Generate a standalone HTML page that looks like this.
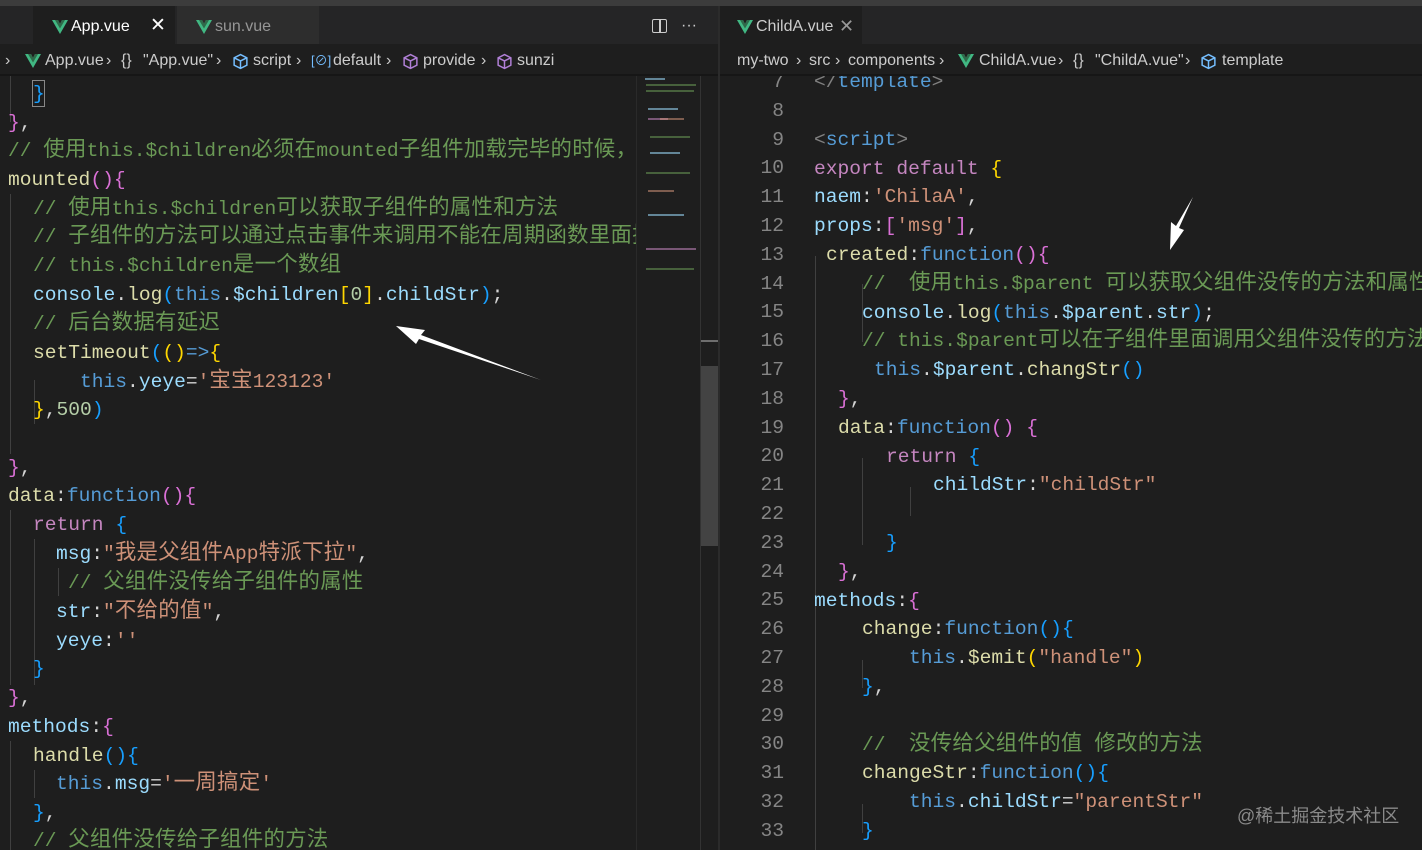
<!DOCTYPE html>
<html><head><meta charset="utf-8"><style>
*{margin:0;padding:0;box-sizing:border-box}
body{width:1422px;height:850px;background:#1e1e1e;overflow:hidden;position:relative;font-family:"Liberation Sans","Noto Sans CJK SC",sans-serif}
.abs{position:absolute}
.code{position:absolute;overflow:hidden;font-family:"Liberation Mono","Noto Sans CJK SC",monospace;font-size:19.6px;color:#d4d4d4}
.l{position:absolute;white-space:pre;height:29px;line-height:29px}
.z{font-size:21.4px;letter-spacing:0.3px}
.c{color:#6a9955}.k{color:#569cd6}.p{color:#9cdcfe}.s{color:#ce9178}.f{color:#dcdcaa}.r{color:#c586c0}
.g{color:#ffd700}.m{color:#da70d6}.b{color:#179fff}.t{color:#808080}
.n{position:absolute;width:40px;text-align:right;color:#858585;white-space:pre;line-height:28.8px}
.tx{position:absolute;font-size:16px;white-space:nowrap;line-height:20px}
.guide{position:absolute;width:1px;background:#404040}
.mm{position:absolute;height:2px;opacity:.55}
</style></head><body>
<svg width="0" height="0" style="position:absolute"><defs><symbol id="vue" viewBox="0 0 16 14"><polygon points="0,0 6,0 8,4 10,0 16,0 8,14" fill="#41b883"/><polygon points="3,0 6,0 8,4 10,0 13,0 8,8.5" fill="#2f6a4a"/></symbol>
<symbol id="cube" viewBox="0 0 16 16"><path d="M8 1.5 L14 4.5 L14 11.5 L8 14.5 L2 11.5 L2 4.5 Z M2 4.5 L8 7.5 L14 4.5 M8 7.5 L8 14.5" fill="none" stroke="currentColor" stroke-width="1.4"/></symbol></defs></svg>
<div class="abs" style="left:0;top:0;width:1422px;height:6px;background:#3c3c3c"></div>
<div class="abs" style="left:0;top:6px;width:718px;height:38px;background:#252526"></div>
<div class="abs" style="left:720px;top:6px;width:702px;height:38px;background:#252526"></div>
<div class="abs" style="left:33px;top:6px;width:142px;height:38px;background:#1e1e1e"></div>
<div class="abs" style="left:177px;top:6px;width:142px;height:38px;background:#2d2d2d"></div>
<div class="abs" style="left:720px;top:6px;width:142px;height:38px;background:#1e1e1e"></div>
<svg class="abs" style="left:52px;top:20px" width="16" height="14"><use href="#vue"/></svg>
<div class="tx" style="left:71px;top:17px;color:#fff">App.vue</div>
<div class="tx" style="left:150px;top:16px;color:#fff;font-size:19px">✕</div>
<svg class="abs" style="left:196px;top:20px" width="16" height="14"><use href="#vue"/></svg>
<div class="tx" style="left:215px;top:17px;color:#969696">sun.vue</div>
<div class="abs" style="left:652px;top:19px;width:15px;height:14px;border:1.5px solid #ccc;border-radius:2px"></div>
<div class="abs" style="left:659px;top:19px;width:1.5px;height:14px;background:#ccc"></div>
<div class="tx" style="left:681px;top:16px;color:#ccc">···</div>
<svg class="abs" style="left:737px;top:20px" width="16" height="14"><use href="#vue"/></svg>
<div class="tx" style="left:756px;top:17px;color:#ccc">ChildA.vue</div>
<div class="tx" style="left:839px;top:16px;color:#999;font-size:18px">✕</div>

<!-- breadcrumbs -->
<div class="tx" style="left:5px;top:51px;color:#ccc">›</div>
<svg class="abs" style="left:25px;top:54px" width="16" height="14"><use href="#vue"/></svg>
<div class="tx" style="left:45px;top:51px;color:#ccc">App.vue</div>
<div class="tx" style="left:106px;top:51px;color:#ccc">›</div>
<div class="tx" style="left:121px;top:51px;color:#ccc">{}</div>
<div class="tx" style="left:143px;top:51px;color:#ccc">"App.vue"</div>
<div class="tx" style="left:216px;top:51px;color:#ccc">›</div>
<svg class="abs" style="left:232px;top:53px;color:#75beff" width="17" height="17"><use href="#cube"/></svg>
<div class="tx" style="left:253px;top:51px;color:#ccc">script</div>
<div class="tx" style="left:296px;top:51px;color:#ccc">›</div>
<div class="tx" style="left:311px;top:51px;color:#75beff;font-size:13px">[⊘]</div>
<div class="tx" style="left:333px;top:51px;color:#ccc">default</div>
<div class="tx" style="left:386px;top:51px;color:#ccc">›</div>
<svg class="abs" style="left:402px;top:53px;color:#b180d7" width="17" height="17"><use href="#cube"/></svg>
<div class="tx" style="left:423px;top:51px;color:#ccc">provide</div>
<div class="tx" style="left:481px;top:51px;color:#ccc">›</div>
<svg class="abs" style="left:496px;top:53px;color:#b180d7" width="17" height="17"><use href="#cube"/></svg>
<div class="tx" style="left:517px;top:51px;color:#ccc">sunzi</div>

<div class="tx" style="left:737px;top:51px;color:#ccc">my-two</div>
<div class="tx" style="left:796px;top:51px;color:#ccc">›</div>
<div class="tx" style="left:809px;top:51px;color:#ccc">src</div>
<div class="tx" style="left:835px;top:51px;color:#ccc">›</div>
<div class="tx" style="left:848px;top:51px;color:#ccc">components</div>
<div class="tx" style="left:939px;top:51px;color:#ccc">›</div>
<svg class="abs" style="left:958px;top:54px" width="16" height="14"><use href="#vue"/></svg>
<div class="tx" style="left:979px;top:51px;color:#ccc">ChildA.vue</div>
<div class="tx" style="left:1058px;top:51px;color:#ccc">›</div>
<div class="tx" style="left:1073px;top:51px;color:#ccc">{}</div>
<div class="tx" style="left:1095px;top:51px;color:#ccc">"ChildA.vue"</div>
<div class="tx" style="left:1185px;top:51px;color:#ccc">›</div>
<svg class="abs" style="left:1200px;top:53px;color:#75beff" width="17" height="17"><use href="#cube"/></svg>
<div class="tx" style="left:1222px;top:51px;color:#ccc">template</div>

<div class="abs" style="left:0;top:74px;width:718px;height:2px;background:#161616"></div>
<div class="abs" style="left:720px;top:74px;width:702px;height:2px;background:#161616"></div>

<!-- left code -->
<div class="code" style="left:0;top:76px;width:636px;height:774px">
<div class="guide" style="left:10px;top:0;height:46px"></div>
<div class="guide" style="left:10px;top:118px;height:260px"></div>
<div class="guide" style="left:34px;top:304px;height:44px"></div>
<div class="guide" style="left:10px;top:434px;height:175px"></div>
<div class="guide" style="left:34px;top:463px;height:146px"></div>
<div class="guide" style="left:58px;top:492px;height:28px"></div>
<div class="guide" style="left:10px;top:665px;height:110px"></div>
<div class="guide" style="left:34px;top:694px;height:28px"></div>
<div class="abs" style="left:32px;top:4px;width:13px;height:27px;border:1px solid #888"></div>
<div class="l" style="left:33px;top:4px"><span class="b">}</span></div>
<div class="l" style="left:8px;top:33px"><span class="m">}</span>,</div>
<div class="l" style="left:8px;top:61px"><span class="c">// <span class="z">使用</span>this.$children<span class="z">必须在</span>mounted<span class="z">子组件加载完毕的时候，</span></span></div>
<div class="l" style="left:8px;top:90px"><span class="f">mounted</span><span class="m">()</span><span class="m">{</span></div>
<div class="l" style="left:33px;top:119px"><span class="c">// <span class="z">使用</span>this.$children<span class="z">可以获取子组件的属性和方法</span></span></div>
<div class="l" style="left:33px;top:147px"><span class="c">// <span class="z">子组件的方法可以通过点击事件来调用不能在周期函数里面掉</span></span></div>
<div class="l" style="left:33px;top:176px"><span class="c">// this.$children<span class="z">是一个数组</span></span></div>
<div class="l" style="left:33px;top:205px"><span class="p">console</span>.<span class="f">log</span><span class="b">(</span><span class="k">this</span>.<span class="p">$children</span><span class="g">[</span><span style="color:#b5cea8">0</span><span class="g">]</span>.<span class="p">childStr</span><span class="b">)</span>;</div>
<div class="l" style="left:33px;top:234px"><span class="c">// <span class="z">后台数据有延迟</span></span></div>
<div class="l" style="left:33px;top:263px"><span class="f">setTimeout</span><span class="b">(</span><span class="g">()</span><span class="k">=&gt;</span><span class="g">{</span></div>
<div class="l" style="left:80px;top:292px"><span class="k">this</span>.<span class="p">yeye</span>=<span class="s">'<span class="z">宝宝</span>123123'</span></div>
<div class="l" style="left:33px;top:320px"><span class="g">}</span>,<span style="color:#b5cea8">500</span><span class="b">)</span></div>
<div class="l" style="left:8px;top:378px"><span class="m">}</span>,</div>
<div class="l" style="left:8px;top:406px"><span class="f">data</span>:<span class="k">function</span><span class="m">()</span><span class="m">{</span></div>
<div class="l" style="left:33px;top:435px"><span class="r">return</span> <span class="b">{</span></div>
<div class="l" style="left:56px;top:464px"><span class="p">msg</span>:<span class="s">"<span class="z">我是父组件</span>App<span class="z">特派下拉</span>"</span>,</div>
<div class="l" style="left:68px;top:493px"><span class="c">// <span class="z">父组件没传给子组件的属性</span></span></div>
<div class="l" style="left:56px;top:522px"><span class="p">str</span>:<span class="s">"<span class="z">不给的值</span>"</span>,</div>
<div class="l" style="left:56px;top:551px"><span class="p">yeye</span>:<span class="s">''</span></div>
<div class="l" style="left:33px;top:579px"><span class="b">}</span></div>
<div class="l" style="left:8px;top:608px"><span class="m">}</span>,</div>
<div class="l" style="left:8px;top:637px"><span class="p">methods</span>:<span class="m">{</span></div>
<div class="l" style="left:33px;top:666px"><span class="f">handle</span><span class="b">()</span><span class="b">{</span></div>
<div class="l" style="left:56px;top:694px"><span class="k">this</span>.<span class="p">msg</span>=<span class="s">'<span class="z">一周搞定</span>'</span></div>
<div class="l" style="left:33px;top:723px"><span class="b">}</span>,</div>
<div class="l" style="left:33px;top:751px"><span class="c">// <span class="z">父组件没传给子组件的方法</span></span></div>
</div>
<!-- minimap -->
<div class="abs" style="left:636px;top:76px;width:64px;height:774px;background:#1e1e1e;border-left:1px solid #2a2a2a"></div>
<div class="mm" style="left:645px;top:78px;width:20px;background:#9cdcfe"></div>
<div class="mm" style="left:646px;top:84px;width:50px;background:#6a9955"></div>
<div class="mm" style="left:646px;top:90px;width:48px;background:#6a9955"></div>
<div class="mm" style="left:648px;top:108px;width:30px;background:#9cdcfe"></div>
<div class="mm" style="left:648px;top:118px;width:20px;background:#c586c0"></div>
<div class="mm" style="left:660px;top:118px;width:24px;background:#ce9178"></div>
<div class="mm" style="left:650px;top:136px;width:40px;background:#6a9955"></div>
<div class="mm" style="left:650px;top:152px;width:30px;background:#9cdcfe"></div>
<div class="mm" style="left:646px;top:172px;width:44px;background:#6a9955"></div>
<div class="mm" style="left:648px;top:190px;width:26px;background:#ce9178"></div>
<div class="mm" style="left:648px;top:214px;width:36px;background:#9cdcfe"></div>
<div class="mm" style="left:646px;top:248px;width:50px;background:#c586c0"></div>
<div class="mm" style="left:646px;top:268px;width:48px;background:#6a9955"></div>
<!-- scrollbar -->
<div class="abs" style="left:700px;top:76px;width:18px;height:774px;background:#1e1e1e;border-left:1px solid #333"></div>
<div class="abs" style="left:701px;top:340px;width:17px;height:2px;background:#6e6e6e"></div>
<div class="abs" style="left:701px;top:366px;width:17px;height:180px;background:#434343"></div>
<div class="abs" style="left:718px;top:6px;width:2px;height:844px;background:#2b2b2b"></div>

<!-- right code -->
<div class="code" style="left:720px;top:76px;width:702px;height:774px">
<div class="guide" style="left:95px;top:180px;height:595px"></div>
<div class="guide" style="left:142px;top:208px;height:58px"></div>
<div class="guide" style="left:142px;top:382px;height:87px"></div>
<div class="guide" style="left:190px;top:411px;height:29px"></div>
<div class="guide" style="left:142px;top:584px;height:28px"></div>
<div class="guide" style="left:142px;top:728px;height:29px"></div>
<div class="n" style="left:24px;top:-8px">7
8
9
10
11
12
13
14
15
16
17
18
19
20
21
22
23
24
25
26
27
28
29
30
31
32
33</div>
<div class="l" style="left:94px;top:-8px"><span class="t">&lt;/</span><span class="k">template</span><span class="t">&gt;</span></div>
<div class="l" style="left:94px;top:50px"><span class="t">&lt;</span><span class="k">script</span><span class="t">&gt;</span></div>
<div class="l" style="left:94px;top:79px"><span class="r">export</span> <span class="r">default</span> <span class="g">{</span></div>
<div class="l" style="left:94px;top:107px"><span class="p">naem</span>:<span class="s">'ChilaA'</span>,</div>
<div class="l" style="left:94px;top:136px"><span class="p">props</span>:<span class="m">[</span><span class="s">'msg'</span><span class="m">]</span>,</div>
<div class="l" style="left:106px;top:165px"><span class="f">created</span>:<span class="k">function</span><span class="m">()</span><span class="m">{</span></div>
<div class="l" style="left:142px;top:194px"><span class="c">//  <span class="z">使用</span>this.$parent <span class="z">可以获取父组件没传的方法和属性</span></span></div>
<div class="l" style="left:142px;top:223px"><span class="p">console</span>.<span class="f">log</span><span class="b">(</span><span class="k">this</span>.<span class="p">$parent</span>.<span class="p">str</span><span class="b">)</span>;</div>
<div class="l" style="left:142px;top:251px"><span class="c">// this.$parent<span class="z">可以在子组件里面调用父组件没传的方法</span></span></div>
<div class="l" style="left:154px;top:280px"><span class="k">this</span>.<span class="p">$parent</span>.<span class="f">changStr</span><span class="b">()</span></div>
<div class="l" style="left:118px;top:309px"><span class="m">}</span>,</div>
<div class="l" style="left:118px;top:338px"><span class="f">data</span>:<span class="k">function</span><span class="m">()</span> <span class="m">{</span></div>
<div class="l" style="left:166px;top:367px"><span class="r">return</span> <span class="b">{</span></div>
<div class="l" style="left:213px;top:395px"><span class="p">childStr</span>:<span class="s">"childStr"</span></div>
<div class="l" style="left:166px;top:453px"><span class="b">}</span></div>
<div class="l" style="left:118px;top:482px"><span class="m">}</span>,</div>
<div class="l" style="left:94px;top:511px"><span class="p">methods</span>:<span class="m">{</span></div>
<div class="l" style="left:142px;top:539px"><span class="f">change</span>:<span class="k">function</span><span class="b">()</span><span class="b">{</span></div>
<div class="l" style="left:189px;top:568px"><span class="k">this</span>.<span class="f">$emit</span><span class="g">(</span><span class="s">"handle"</span><span class="g">)</span></div>
<div class="l" style="left:142px;top:597px"><span class="b">}</span>,</div>
<div class="l" style="left:142px;top:655px"><span class="c">//  <span class="z">没传给父组件的值</span> <span class="z">修改的方法</span></span></div>
<div class="l" style="left:142px;top:683px"><span class="f">changeStr</span>:<span class="k">function</span><span class="b">()</span><span class="b">{</span></div>
<div class="l" style="left:189px;top:712px"><span class="k">this</span>.<span class="p">childStr</span>=<span class="s">"parentStr"</span></div>
<div class="l" style="left:142px;top:741px"><span class="b">}</span></div>
</div>
<div class="abs" style="left:1237px;top:802px;font-size:18px;color:#8a8a8a;white-space:nowrap">@稀土掘金技术社区</div>

<svg class="abs" style="left:0;top:0" width="1422" height="850">
<polygon points="396,326 425,330 421,335 541,380 419,339 416,344" fill="#fff"/>
<polygon points="1170,250 1171,222 1176,226 1193,197 1179,228 1184,230" fill="#fff"/>
</svg>
</body></html>
